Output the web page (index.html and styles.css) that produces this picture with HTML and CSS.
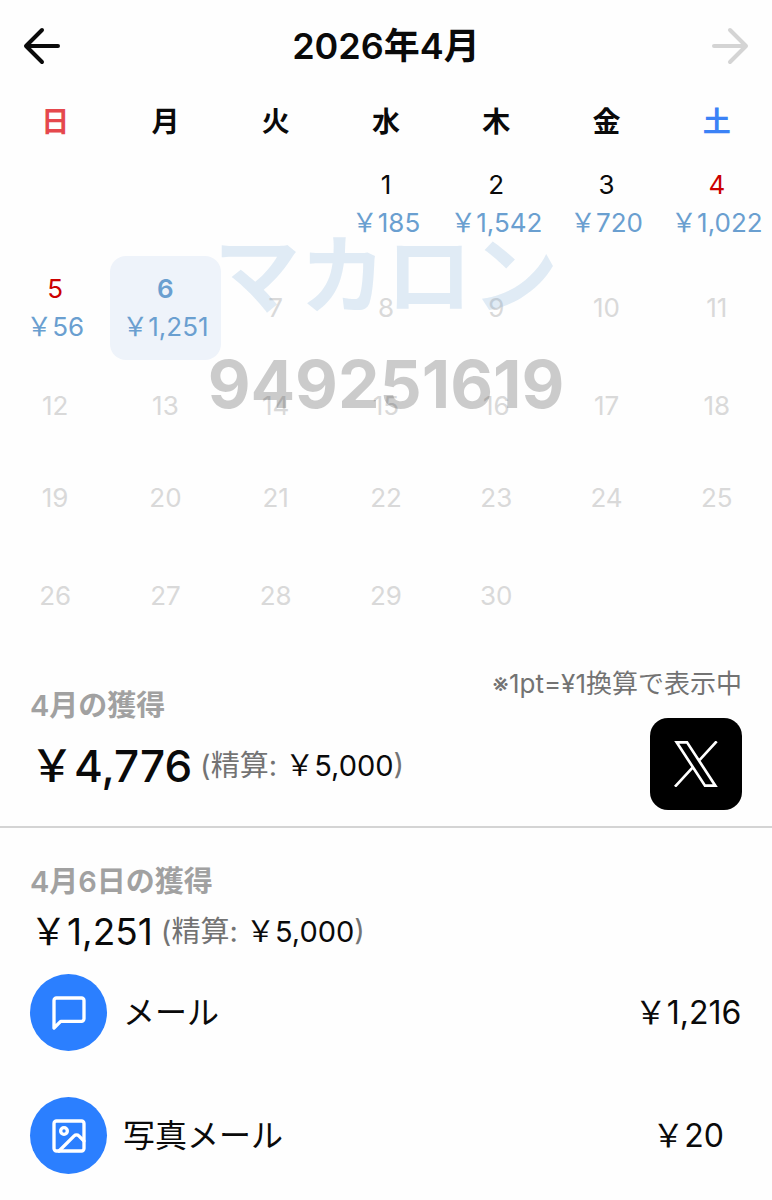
FILE: index.html
```html
<!DOCTYPE html>
<html lang="ja">
<head>
    <meta charset="UTF-8">
    <meta name="viewport" content="width=device-width, initial-scale=1.0">
    <title>2026年4月</title>
    <link rel="stylesheet" href="styles.css">
</head>
<body>
    <header class="month-nav">
        <button class="nav-button" type="button" aria-label="前の月">
            <svg class="nav-icon" viewBox="0 0 40 40"><path d="M20 4 4 20l16 16M5 20h31"/></svg>
        </button>
        <h1 class="month-title">2026年4月</h1>
        <button class="nav-button" type="button" aria-label="次の月" disabled>
            <svg class="nav-icon" viewBox="0 0 40 40"><path d="m20 4 16 16-16 16M35 20H4"/></svg>
        </button>
    </header>

    <main>
        <div class="calendar-wrap">
            <table class="calendar">
                <thead>
                    <tr><th class="sun">日</th><th>月</th><th>火</th><th>水</th><th>木</th><th>金</th><th class="sat">土</th></tr>
                </thead>
                <tbody>
                    <tr class="week-tall">
                        <td></td>
                        <td></td>
                        <td></td>
                        <td><button class="day" type="button">1<span class="amount">￥185</span></button></td>
                        <td><button class="day" type="button">2<span class="amount">￥1,542</span></button></td>
                        <td><button class="day" type="button">3<span class="amount">￥720</span></button></td>
                        <td><button class="day holiday" type="button">4<span class="amount">￥1,022</span></button></td>
                    </tr>
                    <tr class="week-tall">
                        <td><button class="day holiday" type="button">5<span class="amount">￥56</span></button></td>
                        <td><button class="day selected" type="button" aria-pressed="true">6<span class="amount">￥1,251</span></button></td>
                        <td><button class="day" type="button" disabled>7</button></td>
                        <td><button class="day" type="button" disabled>8</button></td>
                        <td><button class="day" type="button" disabled>9</button></td>
                        <td><button class="day" type="button" disabled>10</button></td>
                        <td><button class="day" type="button" disabled>11</button></td>
                    </tr>
                    <tr class="week">
                        <td><button class="day" type="button" disabled>12</button></td>
                        <td><button class="day" type="button" disabled>13</button></td>
                        <td><button class="day" type="button" disabled>14</button></td>
                        <td><button class="day" type="button" disabled>15</button></td>
                        <td><button class="day" type="button" disabled>16</button></td>
                        <td><button class="day" type="button" disabled>17</button></td>
                        <td><button class="day" type="button" disabled>18</button></td>
                    </tr>
                    <tr class="week">
                        <td><button class="day" type="button" disabled>19</button></td>
                        <td><button class="day" type="button" disabled>20</button></td>
                        <td><button class="day" type="button" disabled>21</button></td>
                        <td><button class="day" type="button" disabled>22</button></td>
                        <td><button class="day" type="button" disabled>23</button></td>
                        <td><button class="day" type="button" disabled>24</button></td>
                        <td><button class="day" type="button" disabled>25</button></td>
                    </tr>
                    <tr class="week-tall">
                        <td><button class="day" type="button" disabled>26</button></td>
                        <td><button class="day" type="button" disabled>27</button></td>
                        <td><button class="day" type="button" disabled>28</button></td>
                        <td><button class="day" type="button" disabled>29</button></td>
                        <td><button class="day" type="button" disabled>30</button></td>
                        <td></td>
                        <td></td>
                    </tr>
                </tbody>
            </table>
            <div class="watermark">
                <span class="watermark-name">マカロン</span>
                <span class="watermark-id">949251619</span>
            </div>
        </div>

        <section class="summary">
            <div>
                <h2 class="summary-label">4月の獲得</h2>
                <p class="total total-month">￥4,776 <span class="settled">(精算: <span class="settled-value">￥5,000</span>)</span></p>
            </div>
            <div class="summary-side">
                <p class="rate-note">※1pt=¥1換算で表示中</p>
                <a class="x-link" href="#" aria-label="Xでシェア">
                    <svg class="x-icon" viewBox="0 0 132 138"><path d="M8 4h31l85 130H93zM128 1 73 61M3 137l56-61"/></svg>
                </a>
            </div>
        </section>

        <section class="detail">
            <h2 class="summary-label">4月6日の獲得</h2>
            <p class="total total-day">￥1,251 <span class="settled">(精算: <span class="settled-value">￥5,000</span>)</span></p>
            <ul class="items">
                <li class="item">
                    <span class="item-badge">
                        <svg class="item-icon" viewBox="0 0 24 24"><path d="M21 15.500a1.500 1.500 0 0 1-1.500 1.500H7l-4 4V4.500A1.500 1.500 0 0 1 4.500 3h15A1.500 1.500 0 0 1 21 4.500z"/></svg>
                    </span>
                    <span class="item-name">メール</span>
                    <span class="item-value">￥1,216</span>
                </li>
                <li class="item">
                    <span class="item-badge">
                        <svg class="item-icon" viewBox="0 0 24 24"><rect x="3" y="3" width="18" height="18" rx="1.500"/><circle cx="9" cy="9" r="2"/><path d="m21 15-3.100-3.100a2 2 0 0 0-2.800 0L6 21"/></svg>
                    </span>
                    <span class="item-name">写真メール</span>
                    <span class="item-value">￥20</span>
                </li>
            </ul>
        </section>
    </main>
</body>
</html>
```

FILE: styles.css
```css
* {
    box-sizing: border-box;
}
body {
    margin: 0;
    background-color: #fefefe;
    color: #0a0a0a;
    font-family: Inter, "Noto Sans CJK JP", sans-serif;
    font-size: 26px;
}
h1, h2, p, ul {
    margin: 0;
    padding: 0;
}
button {
    border: 0;
    padding: 0;
    background: none;
    color: inherit;
    font: inherit;
    cursor: pointer;
}
button:disabled {
    cursor: default;
}

/* month header */
.month-nav {
    display: flex;
    align-items: center;
    justify-content: space-between;
    height: 92px;
    padding: 0 22px;
}
.nav-button {
    height: 40px;
}
.nav-button:disabled {
    color: #d4d4d4;
}
.nav-icon {
    display: block;
    width: 40px;
    height: 40px;
    fill: none;
    stroke: currentColor;
    stroke-width: 4;
    stroke-linecap: round;
    stroke-linejoin: round;
}
.month-title {
    font-size: 36px;
    font-weight: 600;
    line-height: 46px;
}

/* calendar */
.calendar-wrap {
    position: relative;
}
.calendar {
    width: 100%;
    table-layout: fixed;
    border-collapse: collapse;
}
.calendar th {
    height: 60px;
    padding: 0;
    font-size: 28px;
    font-weight: 600;
    line-height: 38px;
}
.calendar td {
    padding: 0;
}
.sun {
    color: #e5484d;
}
.sat {
    color: #3b82f6;
}
.week-tall .day {
    height: 104px;
}
.week .day {
    height: 92px;
}
.day {
    display: flex;
    flex-direction: column;
    align-items: center;
    justify-content: center;
    width: 100%;
    border-radius: 16px;
    line-height: 38px;
}
.day:disabled {
    color: #d9d9d9;
}
.holiday {
    color: #c00;
}
.amount {
    color: #6a9fd0;
    font-weight: 400;
    white-space: nowrap;
}
.selected {
    background-color: #eef3fa;
    color: #6a9fd0;
    font-weight: 600;
}
.watermark {
    position: absolute;
    top: 130px;
    left: 0;
    right: 0;
    display: flex;
    flex-direction: column;
    align-items: center;
    font-weight: 700;
    line-height: 108px;
    pointer-events: none;
}
.watermark-name {
    color: rgba(106, 159, 208, 0.2);
    font-size: 86px;
}
.watermark-id {
    color: rgba(0, 0, 0, 0.2);
    font-size: 66px;
}

/* totals */
.summary {
    display: flex;
    justify-content: space-between;
    padding: 18px 30px 16px;
    border-bottom: 2px solid #d4d4d4;
}
.summary-label {
    color: #a1a1a1;
    font-size: 29px;
    font-weight: 600;
    line-height: 40px;
}
.summary > div:first-child {
    padding-top: 20px;
}
.summary-side {
    display: flex;
    flex-direction: column;
    align-items: flex-end;
    gap: 16px;
}
.rate-note {
    color: #737373;
    font-size: 26px;
    line-height: 36px;
}
.x-link {
    display: flex;
    align-items: center;
    justify-content: center;
    width: 92px;
    height: 92px;
    border-radius: 18px;
    background-color: #000;
}
.x-icon {
    width: 44px;
    height: 46px;
    fill: none;
    stroke: #fff;
    stroke-width: 8;
}
.total {
    display: flex;
    align-items: center;
    gap: 8px;
}
.total-month {
    font-size: 44px;
    font-weight: 500;
    line-height: 80px;
}
.total-day {
    font-size: 37px;
    line-height: 60px;
}
.settled {
    color: #737373;
    font-size: 29px;
    font-weight: 400;
}
.settled-value {
    color: #0a0a0a;
}

/* breakdown */
.detail {
    padding: 34px 30px 0;
}
.items {
    display: flex;
    flex-direction: column;
    gap: 46px;
    padding-top: 12px;
    list-style: none;
}
.item {
    display: flex;
    align-items: center;
    gap: 16px;
    font-size: 32px;
    line-height: 40px;
}
.item-badge {
    display: flex;
    align-items: center;
    justify-content: center;
    width: 77px;
    height: 77px;
    border-radius: 50%;
    background-color: #2b7fff;
}
.item-icon {
    width: 40px;
    height: 40px;
    fill: none;
    stroke: #fff;
    stroke-width: 2;
    stroke-linecap: round;
    stroke-linejoin: round;
}
.item-name {
    flex: 1;
}
.item-value {
    min-width: 108px;
    text-align: center;
}
```
